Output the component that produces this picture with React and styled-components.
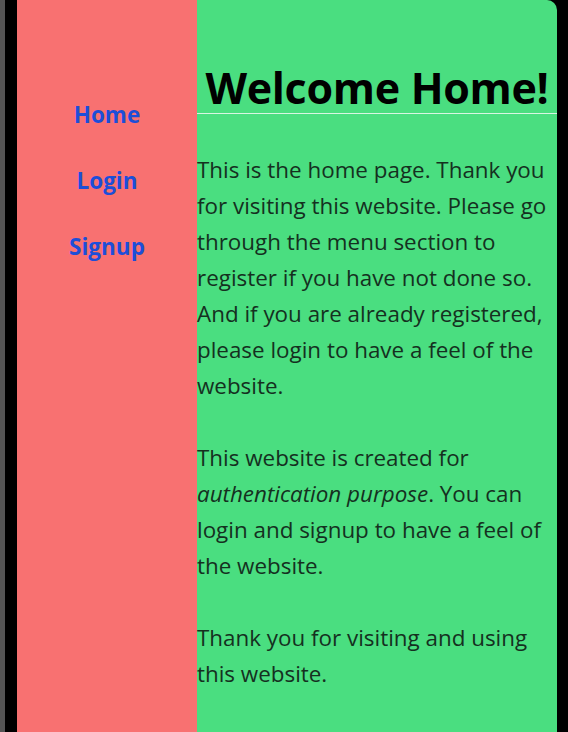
import React from "react";
import styled, { createGlobalStyle } from "styled-components";

const Global = createGlobalStyle`
  html, body {
    margin: 0;
    padding: 0;
    background: #000;
    height: 100%;
  }
  #root {
    height: 100%;
  }
`;

const Frame = styled.div`
  display: flex;
  height: 732px;
  overflow: hidden;
  border-left: 5px solid #555;
  padding-left: 12px;
  padding-right: 11px;
  font-family: "Open Sans", "Noto Sans", sans-serif;
`;

const Sidebar = styled.nav`
  width: 180px;
  flex-shrink: 0;
  background: #f87171;
  display: flex;
  flex-direction: column;
  align-items: center;
  padding-top: 100px;
  gap: 36px;
`;

const NavLink = styled.a`
  color: #1d4ed8;
  font-weight: 700;
  font-size: 22.5px;
  line-height: 30px;
  text-decoration: none;
`;

const Main = styled.main`
  flex: 1;
  background: #4ade80;
  border-top-right-radius: 10px;
`;

const Title = styled.h1`
  margin: 63px 0 0;
  font-size: 43px;
  font-weight: 700;
  line-height: 50px;
  letter-spacing: -0.3px;
  color: #000;
  text-align: center;
  white-space: nowrap;
  border-bottom: 1px solid #d9f5e3;
`;

const Body = styled.div`
  padding-top: 38px;
  color: #15301f;
  font-size: 22.4px;
  line-height: 36px;
`;

const Para = styled.p`
  margin: 0 0 36px;
`;

export default function App() {
  return (
    <>
      <Global />
      <Frame>
        <Sidebar>
          <NavLink href="#">Home</NavLink>
          <NavLink href="#">Login</NavLink>
          <NavLink href="#">Signup</NavLink>
        </Sidebar>
        <Main>
          <Title>Welcome Home!</Title>
          <Body>
            <Para>
              This is the home page. Thank you for visiting this website.
              Please go through the menu section to register if you have not
              done so. And if you are already registered, please login to have
              a feel of the website.
            </Para>
            <Para>
              This website is created for <em>authentication purpose</em>. You
              can login and signup to have a feel of the website.
            </Para>
            <Para>Thank you for visiting and using this website.</Para>
          </Body>
        </Main>
      </Frame>
    </>
  );
}
